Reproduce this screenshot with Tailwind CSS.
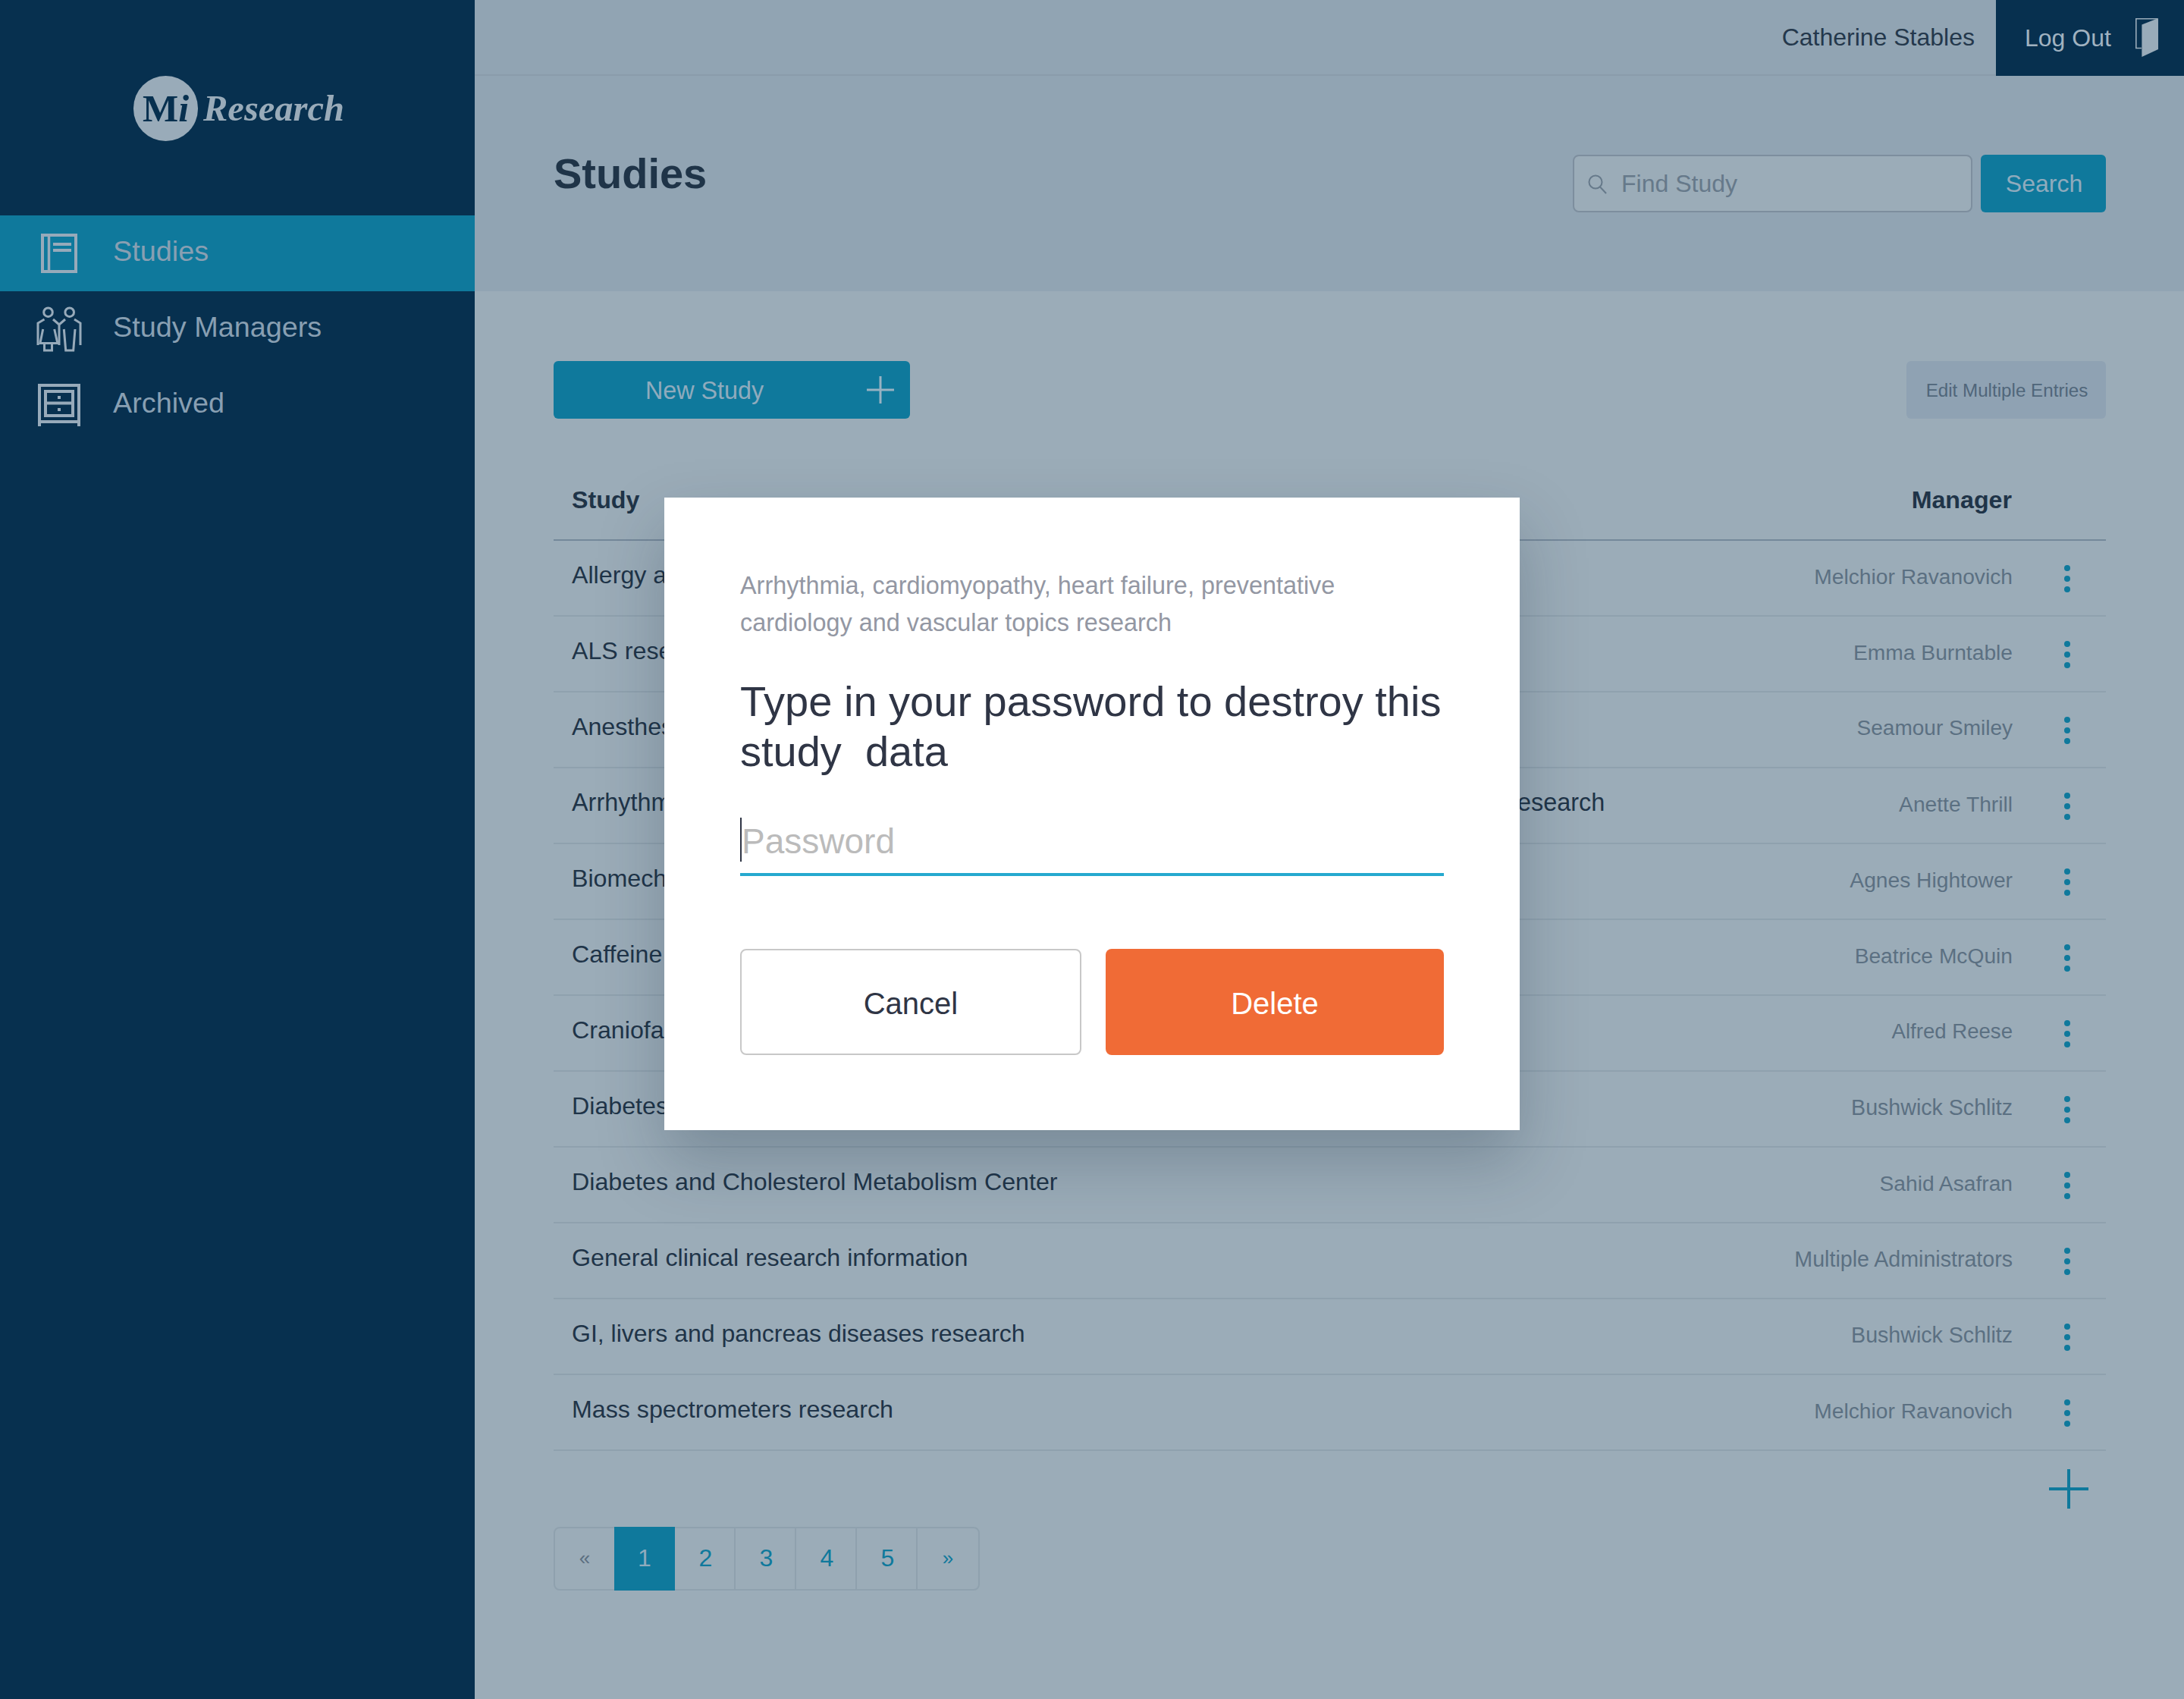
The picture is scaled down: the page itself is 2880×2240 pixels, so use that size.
<!DOCTYPE html>
<html lang="en">
<head>
    <meta charset="UTF-8">
    <title>Mi Research | Studies</title>
    <script src="https://cdn.jsdelivr.net/npm/@tailwindcss/browser@4"></script>
</head>
<body class="font-['Liberation_Sans',Arial,sans-serif]">
<div class="relative flex w-[2880px] h-[2240px] bg-[#9bacb8] overflow-hidden">
    <!-- Sidebar -->
    <aside class="w-[626px] shrink-0 bg-[#07304f] text-[#889fb2]">
        <div class="h-[284px] pt-[100px] pl-[176px]">
            <div class="flex items-center gap-[7px]">
                <div class="w-[85px] h-[86px] rounded-full bg-[#99abb9] flex items-center justify-center text-[#07304f] font-['Liberation_Serif',serif] font-bold text-[50px] leading-none"><span>M<i>i</i></span></div>
                <span class="font-['Liberation_Serif',serif] italic font-bold text-[48.5px] leading-none text-[#99abb9]">Research</span>
            </div>
        </div>
        <nav class="text-[37.8px]">
            <a class="flex items-center h-[100px] bg-[#0f799c]">
                <svg class="ml-[54px] w-[48px] h-[52px]" viewBox="0 0 48 52" fill="none" stroke="#97aaba" stroke-width="4"><rect x="2" y="2" width="44" height="48"/><path d="M10.5 2v48" stroke-width="3.5"/><path d="M16 14h24M16 22h24" stroke-width="4"/></svg>
                <span class="ml-[47px] -mt-[5px]">Studies</span>
            </a>
            <a class="flex items-center h-[100px]">
                <svg class="ml-[48px] w-[60px] h-[60px]" viewBox="0 0 60 60" fill="none" stroke="#97aaba" stroke-width="3"><circle cx="15.5" cy="7.7" r="5.8"/><circle cx="43.7" cy="7.7" r="5.8"/><path d="M10.5 17 2 22v29M50 17l8 5v29M22 17l8 7 8-7M30 24v27"/><path d="M8.7 30 4.9 48.5h23L23.7 30M10.5 48.5V58h10v-9.5"/><path d="M36.3 30l2.4 28h10L51 30"/></svg>
                <span class="ml-[41px] -mt-[5px]">Study Managers</span>
            </a>
            <a class="flex items-center h-[100px]">
                <svg class="ml-[50px] w-[56px] h-[56px]" viewBox="0 0 56 56" fill="none" stroke="#97aaba" stroke-width="4"><path d="M2 56V2h52v54M2 50h52"/><rect x="10" y="10" width="36" height="32"/><path d="M10 25.5h36"/><rect x="26" y="16" width="4" height="4" fill="#97aaba" stroke="none"/><rect x="26" y="32" width="4" height="4" fill="#97aaba" stroke="none"/></svg>
                <span class="ml-[43px] -mt-[5px]">Archived</span>
            </a>
        </nav>
    </aside>

    <main class="flex-1 flex flex-col">
        <!-- Top bar -->
        <div class="h-[100px] bg-[#91a4b3] border-b-2 border-[#8a9cab] flex justify-end items-stretch text-[32px]">
            <div class="flex items-center pr-[28px] text-[#24384c]">Catherine Stables</div>
            <div class="w-[248px] -mb-[2px] bg-[#07304f] flex items-center pl-[38px] text-[#a0b2c0]">
                <span>Log Out</span>
                <svg class="ml-[32px] w-[30px] h-[52px]" viewBox="0 0 30 52" fill="none"><path d="M8 39.5H.8V.8H29" stroke="#99abb9" stroke-width="1.6"/><path d="M30 0v41L8.4 51V8.4z" fill="#99abb9"/></svg>
            </div>
        </div>

        <!-- Title + search -->
        <div class="h-[284px] bg-[#91a4b3] flex justify-between items-start pl-[104px] pr-[103px]">
            <h1 class="mt-[97px] text-[56px] leading-[64px] font-bold text-[#1f3448]">Studies</h1>
            <div class="mt-[104px] flex gap-[11px]">
                <div class="relative w-[527px] h-[76px] rounded-[8px] border-2 border-[#7d8e9e] bg-[#9bacb8] flex items-center">
                    <svg class="absolute left-[17px] top-[23px] w-[28px] h-[28px]" viewBox="0 0 28 28" fill="none" stroke="#66798a" stroke-width="2"><circle cx="11" cy="11" r="8.5"/><path d="M17 17.5 25 26"/></svg>
                    <input class="w-full bg-transparent outline-none pl-[62px] text-[32px] text-[#66798a] placeholder:text-[#66798a]" placeholder="Find Study">
                </div>
                <button class="w-[165px] h-[76px] pl-[2px] rounded-[6px] bg-[#0f799c] text-[#8fabbd] text-[32px]">Search</button>
            </div>
        </div>

        <!-- Content -->
        <div class="flex-1 pl-[104px] pr-[103px]">
            <div class="flex justify-between mt-[92px]">
                <button class="relative w-[470px] h-[76px] rounded-[6px] bg-[#0f799c] text-[#8fabbd] text-[32.3px] flex items-center">
                    <span class="ml-[121px] mt-[3px]">New Study</span>
                    <svg class="absolute left-[413px] top-[20px] w-[36px] h-[36px]" viewBox="0 0 36 36" stroke="#97b2c2" stroke-width="3"><path d="M18 0v36M0 18h36"/></svg>
                </button>
                <button class="w-[263px] h-[76px] pt-[3px] pl-[2px] rounded-[6px] bg-[#8fa2b3] text-[#50667a] text-[24.2px]">Edit Multiple Entries</button>
            </div>

            <!-- Table -->
            <div class="mt-[85px] text-[32.2px]">
                <div class="h-[76px] border-b-2 border-[#74889a] flex items-center justify-between pl-[24px] pr-[124px] font-bold text-[#1f3448]">
                    <span class="pb-[30px]">Study</span><span class="pb-[30px]">Manager</span>
                </div>
                <div class="h-[100px] border-b-2 border-[#8fa1ae] flex items-center pl-[24px] text-[#1f3448]">
                    <span class="flex-1 pb-[8px]">Allergy and asthma research</span>
                    <span class="pb-[4px] text-[28.2px] text-[#5b7082]">Melchior Ravanovich</span>
                    <svg class="ml-[68px] mr-[47px] w-[8px] h-[36px] mt-[2px]" viewBox="0 0 8 36" fill="#0f799c"><circle cx="4" cy="4" r="4"/><circle cx="4" cy="18" r="4"/><circle cx="4" cy="32" r="4"/></svg>
                </div>
                <div class="h-[100px] border-b-2 border-[#8fa1ae] flex items-center pl-[24px] text-[#1f3448]">
                    <span class="flex-1 pb-[8px]">ALS research</span>
                    <span class="pb-[4px] text-[28.2px] text-[#5b7082]">Emma Burntable</span>
                    <svg class="ml-[68px] mr-[47px] w-[8px] h-[36px] mt-[2px]" viewBox="0 0 8 36" fill="#0f799c"><circle cx="4" cy="4" r="4"/><circle cx="4" cy="18" r="4"/><circle cx="4" cy="32" r="4"/></svg>
                </div>
                <div class="h-[100px] border-b-2 border-[#8fa1ae] flex items-center pl-[24px] text-[#1f3448]">
                    <span class="flex-1 pb-[8px]">Anesthesia research</span>
                    <span class="pb-[4px] text-[28px] text-[#5b7082]">Seamour Smiley</span>
                    <svg class="ml-[68px] mr-[47px] w-[8px] h-[36px] mt-[2px]" viewBox="0 0 8 36" fill="#0f799c"><circle cx="4" cy="4" r="4"/><circle cx="4" cy="18" r="4"/><circle cx="4" cy="32" r="4"/></svg>
                </div>
                <div class="h-[100px] border-b-2 border-[#8fa1ae] flex items-center pl-[24px] text-[#1f3448]">
                    <span class="flex-1 pb-[8px] text-[32.4px]">Arrhythmia, cardiomyopathy, heart failure, preventative cardiology and vascular topics research</span>
                    <span class="pb-[4px] text-[28.2px] text-[#5b7082]">Anette Thrill</span>
                    <svg class="ml-[68px] mr-[47px] w-[8px] h-[36px] mt-[2px]" viewBox="0 0 8 36" fill="#0f799c"><circle cx="4" cy="4" r="4"/><circle cx="4" cy="18" r="4"/><circle cx="4" cy="32" r="4"/></svg>
                </div>
                <div class="h-[100px] border-b-2 border-[#8fa1ae] flex items-center pl-[24px] text-[#1f3448]">
                    <span class="flex-1 pb-[8px]">Biomechanics research</span>
                    <span class="pb-[4px] text-[28.2px] text-[#5b7082]">Agnes Hightower</span>
                    <svg class="ml-[68px] mr-[47px] w-[8px] h-[36px] mt-[2px]" viewBox="0 0 8 36" fill="#0f799c"><circle cx="4" cy="4" r="4"/><circle cx="4" cy="18" r="4"/><circle cx="4" cy="32" r="4"/></svg>
                </div>
                <div class="h-[100px] border-b-2 border-[#8fa1ae] flex items-center pl-[24px] text-[#1f3448]">
                    <span class="flex-1 pb-[8px]">Caffeine research</span>
                    <span class="pb-[4px] text-[28.2px] text-[#5b7082]">Beatrice McQuin</span>
                    <svg class="ml-[68px] mr-[47px] w-[8px] h-[36px] mt-[2px]" viewBox="0 0 8 36" fill="#0f799c"><circle cx="4" cy="4" r="4"/><circle cx="4" cy="18" r="4"/><circle cx="4" cy="32" r="4"/></svg>
                </div>
                <div class="h-[100px] border-b-2 border-[#8fa1ae] flex items-center pl-[24px] text-[#1f3448]">
                    <span class="flex-1 pb-[8px]">Craniofacial research</span>
                    <span class="pb-[4px] text-[27.6px] text-[#5b7082]">Alfred Reese</span>
                    <svg class="ml-[68px] mr-[47px] w-[8px] h-[36px] mt-[2px]" viewBox="0 0 8 36" fill="#0f799c"><circle cx="4" cy="4" r="4"/><circle cx="4" cy="18" r="4"/><circle cx="4" cy="32" r="4"/></svg>
                </div>
                <div class="h-[100px] border-b-2 border-[#8fa1ae] flex items-center pl-[24px] text-[#1f3448]">
                    <span class="flex-1 pb-[8px]">Diabetes research</span>
                    <span class="pb-[4px] text-[28.6px] text-[#5b7082]">Bushwick Schlitz</span>
                    <svg class="ml-[68px] mr-[47px] w-[8px] h-[36px] mt-[2px]" viewBox="0 0 8 36" fill="#0f799c"><circle cx="4" cy="4" r="4"/><circle cx="4" cy="18" r="4"/><circle cx="4" cy="32" r="4"/></svg>
                </div>
                <div class="h-[100px] border-b-2 border-[#8fa1ae] flex items-center pl-[24px] text-[#1f3448]">
                    <span class="flex-1 pb-[8px]">Diabetes and Cholesterol Metabolism Center</span>
                    <span class="pb-[4px] text-[28.2px] text-[#5b7082]">Sahid Asafran</span>
                    <svg class="ml-[68px] mr-[47px] w-[8px] h-[36px] mt-[2px]" viewBox="0 0 8 36" fill="#0f799c"><circle cx="4" cy="4" r="4"/><circle cx="4" cy="18" r="4"/><circle cx="4" cy="32" r="4"/></svg>
                </div>
                <div class="h-[100px] border-b-2 border-[#8fa1ae] flex items-center pl-[24px] text-[#1f3448]">
                    <span class="flex-1 pb-[8px]">General clinical research information</span>
                    <span class="pb-[4px] text-[28.6px] text-[#5b7082]">Multiple Administrators</span>
                    <svg class="ml-[68px] mr-[47px] w-[8px] h-[36px] mt-[2px]" viewBox="0 0 8 36" fill="#0f799c"><circle cx="4" cy="4" r="4"/><circle cx="4" cy="18" r="4"/><circle cx="4" cy="32" r="4"/></svg>
                </div>
                <div class="h-[100px] border-b-2 border-[#8fa1ae] flex items-center pl-[24px] text-[#1f3448]">
                    <span class="flex-1 pb-[8px] text-[32px]">GI, livers and pancreas diseases research</span>
                    <span class="pb-[4px] text-[28.6px] text-[#5b7082]">Bushwick Schlitz</span>
                    <svg class="ml-[68px] mr-[47px] w-[8px] h-[36px] mt-[2px]" viewBox="0 0 8 36" fill="#0f799c"><circle cx="4" cy="4" r="4"/><circle cx="4" cy="18" r="4"/><circle cx="4" cy="32" r="4"/></svg>
                </div>
                <div class="h-[100px] border-b-2 border-[#8fa1ae] flex items-center pl-[24px] text-[#1f3448]">
                    <span class="flex-1 pb-[8px]">Mass spectrometers research</span>
                    <span class="pb-[4px] text-[28.2px] text-[#5b7082]">Melchior Ravanovich</span>
                    <svg class="ml-[68px] mr-[47px] w-[8px] h-[36px] mt-[2px]" viewBox="0 0 8 36" fill="#0f799c"><circle cx="4" cy="4" r="4"/><circle cx="4" cy="18" r="4"/><circle cx="4" cy="32" r="4"/></svg>
                </div>
            </div>

            <div class="flex justify-end mt-[24px] pr-[23px]">
                <svg class="w-[52px] h-[52px]" viewBox="0 0 52 52" stroke="#0f799c" stroke-width="4"><path d="M26 0v52M0 26h52"/></svg>
            </div>

            <!-- Pagination -->
            <div class="mt-[24px] w-[562px] h-[84px] flex rounded-[8px] border-2 border-[#8fa1ae] text-[32px] text-[#0f799c] text-center">
                <div class="w-[78px] pb-[2px] flex items-center justify-center text-[26px] text-[#5b6f80]">«</div>
                <div class="w-[80px] -my-[2px] pb-[2px] flex items-center justify-center bg-[#0f799c] text-[#8fabbd]">1</div>
                <div class="w-[80px] pl-[3px] pb-[2px] flex items-center justify-center border-r-2 border-[#8fa1ae]">2</div>
                <div class="w-[80px] pl-[3px] pb-[2px] flex items-center justify-center border-r-2 border-[#8fa1ae]">3</div>
                <div class="w-[80px] pl-[3px] pb-[2px] flex items-center justify-center border-r-2 border-[#8fa1ae]">4</div>
                <div class="w-[80px] pl-[3px] pb-[2px] flex items-center justify-center border-r-2 border-[#8fa1ae]">5</div>
                <div class="flex-1 pb-[2px] flex items-center justify-center text-[26px]">»</div>
            </div>
        </div>
    </main>

    <!-- Delete dialog -->
    <div class="absolute left-[876px] top-[656px] w-[1128px] h-[834px] bg-white shadow-[0_40px_80px_rgba(20,40,60,0.25)] px-[100px] pt-[92px]">
        <p class="text-[32.4px] leading-[49px] text-[#9397a3]">Arrhythmia, cardiomyopathy, heart failure, preventative<br>cardiology and vascular topics research</p>
        <h2 class="mt-[46px] text-[56px] leading-[66px] text-[#2f3545] whitespace-pre">Type in your password to destroy this
study  data</h2>
        <div class="relative mt-[47px] h-[84px] border-b-4 border-[#26a9cf] flex items-center">
            <input class="w-full outline-none text-[46px] pl-[2px] pb-[4px] text-[#2f3545] placeholder:text-[#bbbbbb]" placeholder="Password">
            <span class="absolute left-0 top-[7px] w-[2px] h-[58px] bg-[#2f3545]"></span>
        </div>
        <div class="mt-[96px] flex gap-[32px]">
            <button class="flex-1 h-[140px] pt-[3px] rounded-[8px] border-2 border-[#c8c8c8] bg-white text-[40px] text-[#2f3545]">Cancel</button>
            <button class="flex-1 h-[140px] pt-[3px] rounded-[8px] bg-[#f06b36] text-[40px] text-white">Delete</button>
        </div>
    </div>
</div>
</body>
</html>
